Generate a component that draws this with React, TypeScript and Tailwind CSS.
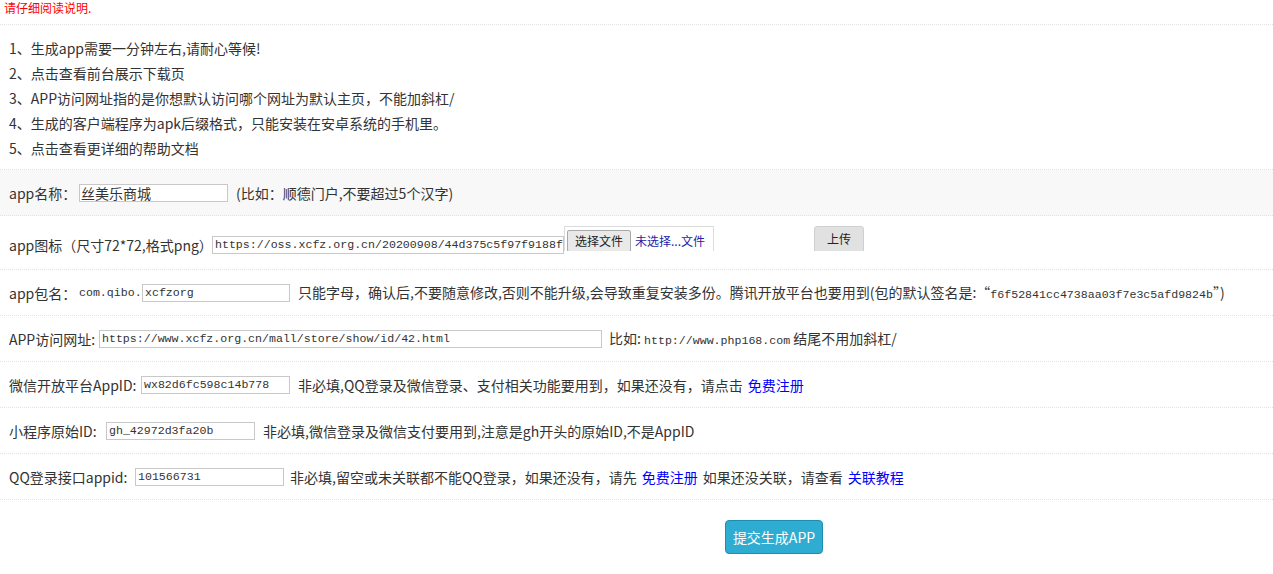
const mono = "font-['Liberation_Mono','Noto_Sans_CJK_SC',monospace]";

const tips = [
  "1、生成app需要一分钟左右,请耐心等候!",
  "2、点击查看前台展示下载页",
  "3、APP访问网址指的是你想默认访问哪个网址为默认主页，不能加斜杠/",
  "4、生成的客户端程序为apk后缀格式，只能安装在安卓系统的手机里。",
  "5、点击查看更详细的帮助文档",
];

function Field({ value, width }: { value: string; width: string }) {
  return (
    <div
      className={`${width} h-[18px] border border-[#c8c8c8] bg-white pl-[2px] text-[11.6px] leading-[16px] text-[#333] whitespace-nowrap overflow-hidden ${mono}`}
    >
      {value}
    </div>
  );
}

function Row({ children, gray, tall }: { children: React.ReactNode; gray?: boolean; tall?: boolean }) {
  return (
    <div
      className={`flex items-center pl-[9px] border-b border-dotted border-[#e3e3e3] ${tall ? "h-[54px] items-start" : "h-[46px]"} ${gray ? "bg-[#f8f8f8]" : ""}`}
    >
      {children}
    </div>
  );
}

function Link({ children }: { children: React.ReactNode }) {
  return <span className="text-[#0000ff] mx-[5px]">{children}</span>;
}

export default function App() {
  return (
    <div className="w-[1273px] min-h-[574px] bg-white text-[14px] text-[#333] font-['Noto_Sans_CJK_SC',sans-serif] leading-none">
      <div className="h-[25px] border-b border-dotted border-[#e3e3e3] pl-[4px] pt-[1px] text-[12px] text-[#ff0000] leading-[13px]">
        请仔细阅读说明.
      </div>

      <div className="pt-[10px] pb-[9px] pl-[9px] border-b border-dotted border-[#e3e3e3]">
        {tips.map((t) => (
          <div key={t} className="h-[25px] flex items-center">
            {t}
          </div>
        ))}
      </div>

      <Row gray>
        <span className="w-[70px] shrink-0">app名称：</span>
        <div className="w-[149px] h-[18px] border border-[#c8c8c8] bg-white pl-[1px] text-[14px] leading-[16px] text-[#333]">
          丝美乐商城
        </div>
        <span className="ml-[8px]">(比如：顺德门户,不要超过5个汉字)</span>
      </Row>

      <Row tall>
        <div className="flex items-center h-[46px] pt-[11px]">
          <span className="w-[203px] shrink-0">app图标（尺寸72*72,格式png）</span>
          <Field value="https://oss.xcfz.org.cn/20200908/44d375c5f97f9188f" width="w-[352px]" />
        </div>
        <div className="mt-[10px] h-[25px] w-[300px] overflow-hidden flex items-start">
          <div className="w-[150px] h-[28px] border border-[#dcdcdc] bg-white flex items-start pt-[3px] pl-[2px] text-[12px]">
            <div className="w-[64px] h-[22px] border border-[#a9a9a9] bg-[#e9e9e9] rounded-[2px] flex items-center justify-center text-[#222]">
              选择文件
            </div>
            <span className="ml-[4px] mt-[5px] text-[#2323a8]">未选择...文件</span>
          </div>
          <div className="ml-[100px] w-[50px] h-[28px] border border-[#cfcfcf] bg-[#e1e1e1] rounded-[3px] flex items-start justify-center pt-[6px] text-[12px] text-[#222]">
            上传
          </div>
        </div>
      </Row>

      <Row>
        <span className="w-[70px] shrink-0">app包名：</span>
        <span className={`w-[63px] shrink-0 text-[11.6px] ${mono}`}>com.qibo.</span>
        <Field value="xcfzorg" width="w-[148px]" />
        <span className="ml-[8px] whitespace-nowrap">
          只能字母，确认后,不要随意修改,否则不能升级,会导致重复安装多份。腾讯开放平台也要用到(包的默认签名是:“
          <span className={`text-[11.6px] ${mono}`}>f6f52841cc4738aa03f7e3c5afd9824b</span>”)
        </span>
      </Row>

      <Row>
        <span className="w-[90px] shrink-0">APP访问网址:</span>
        <Field value="https://www.xcfz.org.cn/mall/store/show/id/42.html" width="w-[503px]" />
        <span className="ml-[7px] whitespace-nowrap">
          比如: <span className={`text-[11.6px] ${mono}`}>http://www.php168.com</span> 结尾不用加斜杠/
        </span>
      </Row>

      <Row>
        <span className="w-[132px] shrink-0">微信开放平台AppID:</span>
        <Field value="wx82d6fc598c14b778" width="w-[149px]" />
        <span className="ml-[8px] whitespace-nowrap">
          非必填,QQ登录及微信登录、支付相关功能要用到，如果还没有，请点击<Link>免费注册</Link>
        </span>
      </Row>

      <Row>
        <span className="w-[97px] shrink-0">小程序原始ID:</span>
        <Field value="gh_42972d3fa20b" width="w-[149px]" />
        <span className="ml-[8px] whitespace-nowrap">
          非必填,微信登录及微信支付要用到,注意是gh开头的原始ID,不是AppID
        </span>
      </Row>

      <Row>
        <span className="w-[126px] shrink-0">QQ登录接口appid:</span>
        <Field value="101566731" width="w-[149px]" />
        <span className="ml-[6px] whitespace-nowrap">
          非必填,留空或未关联都不能QQ登录，如果还没有，请先<Link>免费注册</Link>如果还没关联，请查看<Link>关联教程</Link>
        </span>
      </Row>

      <div className="pt-[20px] pl-[725px]">
        <div className="w-[98px] h-[34px] rounded-[4px] border border-[#1d8db0] bg-[#2eacd1] flex items-center justify-center text-[14px] text-white">
          提交生成APP
        </div>
      </div>
    </div>
  );
}
